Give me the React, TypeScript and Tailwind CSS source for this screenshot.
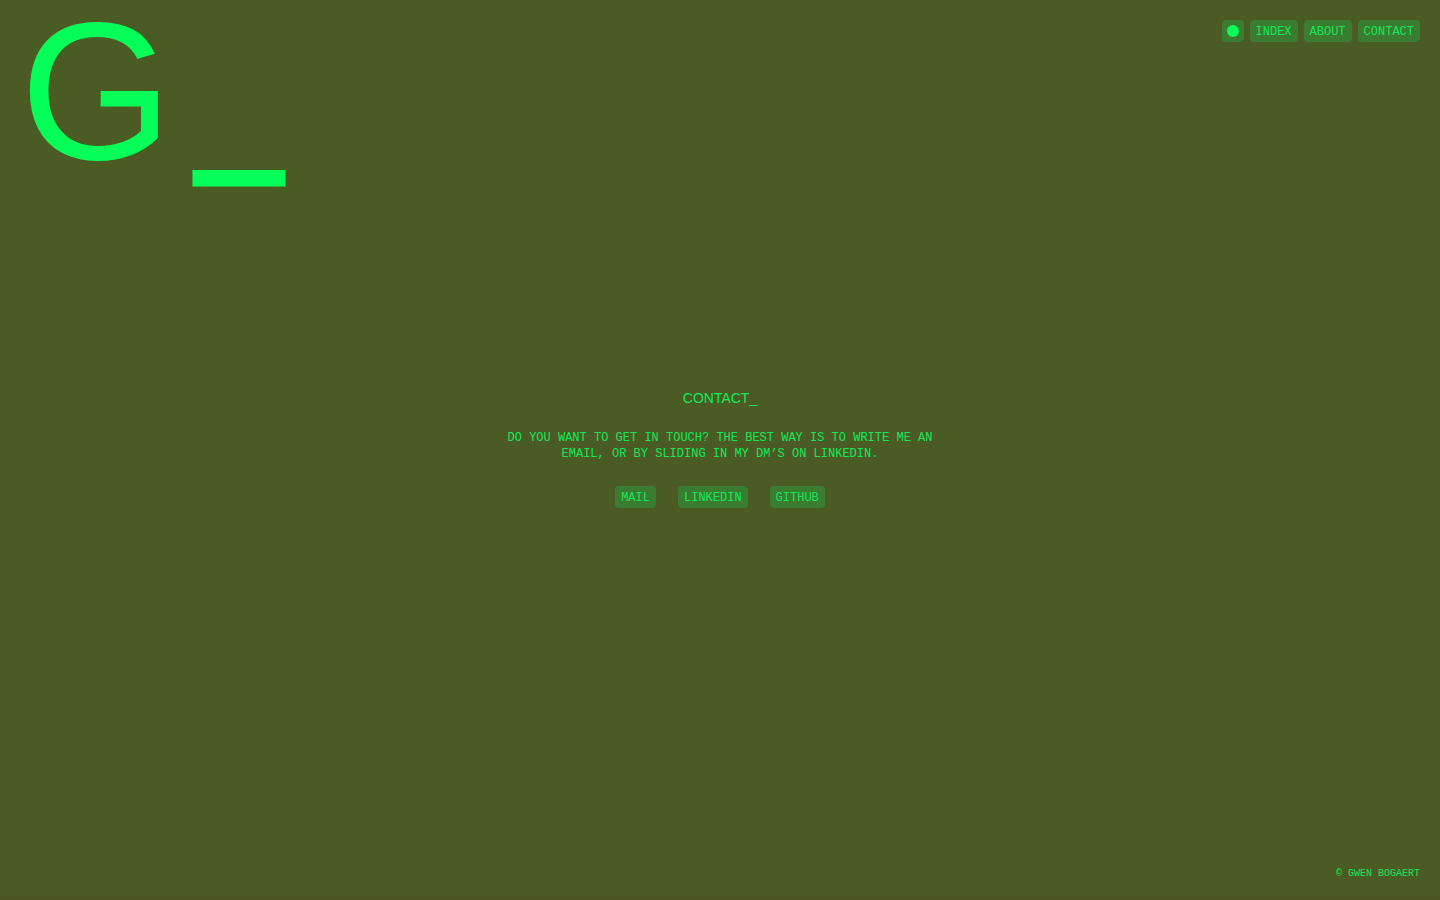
const pill =
  "flex h-[22px] items-center rounded bg-[#3a7c30] px-1.5 pt-0.5 text-[12px] leading-4 text-[#12e85a] hover:bg-[#378c36]";

const pages = ["INDEX", "ABOUT", "CONTACT"];
const channels = ["MAIL", "LINKEDIN", "GITHUB"];

export default function App() {
  return (
    <div className="grid min-h-screen border-b-4 border-[#4c5426] bg-[#4a5c23] font-['Liberation_Mono',monospace] text-[12px] leading-4 text-[#12e85a]">
      <header className="col-start-1 row-start-1 flex items-start justify-between self-start px-5">
        <a href="#" className="flex items-start gap-5 text-[#05ff58]">
          <span className="font-['Liberation_Sans',sans-serif] text-[196px] leading-[184px]">
            G
          </span>
          <span className="font-['Inter',sans-serif] text-[204px] leading-[192px]">
            _
          </span>
        </a>
        <nav className="flex gap-1.5 pt-5">
          <button
            type="button"
            aria-label="Change colours"
            className="flex size-[22px] items-center justify-center rounded bg-[#3a7c30]"
          >
            <span className="size-3 rounded-full bg-[#05ff58]" />
          </button>
          {pages.map((page) => (
            <a key={page} href="#" className={pill}>
              {page}
            </a>
          ))}
        </nav>
      </header>

      <main className="col-start-1 row-start-1 flex flex-col items-center gap-6 self-center justify-self-center pt-0.5 text-center">
        <h1 className="font-['Liberation_Sans',sans-serif] text-[14px] leading-4">
          CONTACT_
        </h1>
        <p className="max-w-[440px]">
          DO YOU WANT TO GET IN TOUCH? THE BEST WAY IS TO WRITE ME AN EMAIL, OR
          BY SLIDING IN MY DM’S ON LINKEDIN.
        </p>
        <div className="flex gap-[22px]">
          {channels.map((channel) => (
            <a key={channel} href="#" className={pill}>
              {channel}
            </a>
          ))}
        </div>
      </main>

      <footer className="col-start-1 row-start-1 self-end justify-self-end px-5 py-3.5 text-[10px]">
        © GWEN BOGAERT
      </footer>
    </div>
  );
}
